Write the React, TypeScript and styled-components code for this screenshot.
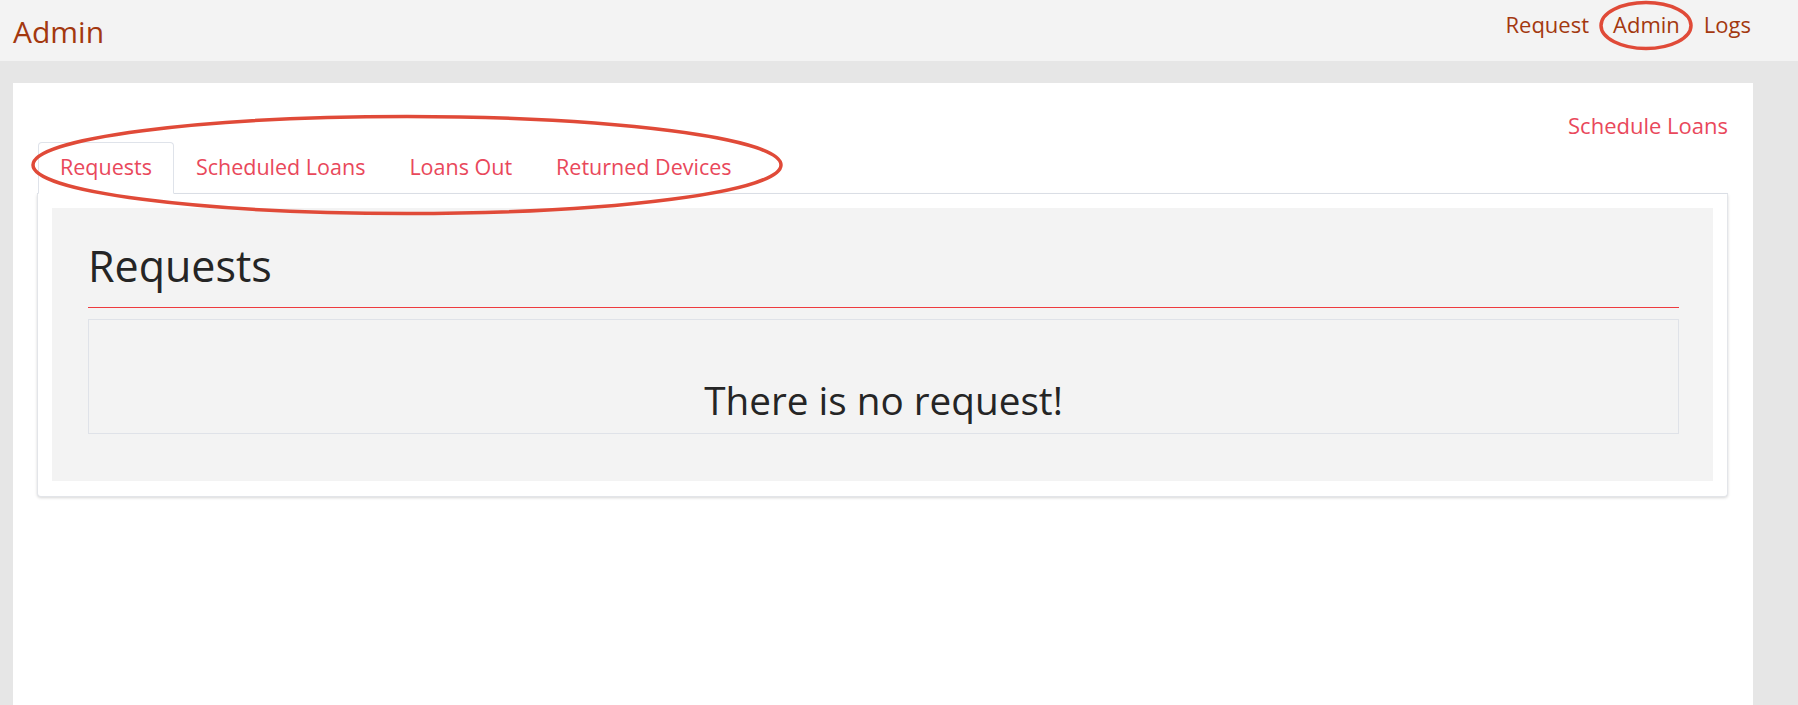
import React from "react";
import styled, { createGlobalStyle } from "styled-components";

const GlobalStyle = createGlobalStyle`
  html, body {
    margin: 0;
    padding: 0;
    height: 100%;
    background: #e6e6e6;
    font-family: "Open Sans", "Noto Sans", Arial, sans-serif;
  }
  #root {
    min-height: 100vh;
    display: flex;
    flex-direction: column;
  }
  * { box-sizing: border-box; }
`;

const Page = styled.div`
  position: relative;
  flex: 1;
  display: flex;
  flex-direction: column;
  min-height: 100vh;
`;

const Header = styled.header`
  height: 61px;
  background: #f3f3f3;
  display: flex;
  justify-content: space-between;
  align-items: flex-start;
  padding: 0 47px 0 13px;
`;

const Brand = styled.a`
  margin-top: 17px;
  font-size: 30px;
  line-height: 30px;
  color: #a3380f;
  text-decoration: none;
`;

const Nav = styled.nav`
  margin-top: 13px;
  display: flex;
  gap: 24px;
`;

const NavLink = styled.a`
  font-size: 22px;
  line-height: 22px;
  color: #a3380f;
  text-decoration: none;
`;

const Main = styled.main`
  flex: 1;
  display: flex;
  padding: 22px 45px 0 13px;
`;

const Container = styled.div`
  flex: 1;
  background: #ffffff;
  padding: 31px 25px 0 24px;
`;

const Actions = styled.div`
  display: flex;
  justify-content: flex-end;
`;

const ActionLink = styled.a`
  font-size: 22px;
  line-height: 22px;
  color: #e9485b;
  text-decoration: none;
`;

const TabList = styled.ul`
  list-style: none;
  margin: 6px 0 0;
  padding: 0 0 0 1px;
  display: flex;
  border-bottom: 1px solid #dfe3ea;
`;

const Tab = styled.li<{ $active?: boolean }>`
  margin-bottom: -1px;
  padding: 13px 21px 15px;
  font-size: 21.5px;
  line-height: 22px;
  color: #e9485b;
  background: ${(p) => (p.$active ? "#ffffff" : "transparent")};
  border: 1px solid ${(p) => (p.$active ? "#dfe3ea" : "transparent")};
  border-bottom-color: ${(p) => (p.$active ? "#ffffff" : "transparent")};
  border-radius: 4px 4px 0 0;
  cursor: pointer;
`;

const Panel = styled.div`
  background: #ffffff;
  border: 1px solid #e3e5e9;
  border-top: none;
  border-radius: 0 0 4px 4px;
  box-shadow: 0 1px 3px rgba(0, 0, 0, 0.16);
  padding: 14px 14px 15px 14px;
`;

const Section = styled.section`
  background: #f3f3f3;
  padding: 36px 34px 47px 36px;
`;

const Title = styled.h2`
  margin: 0;
  padding-bottom: 20px;
  font-size: 43px;
  line-height: 43px;
  font-weight: 400;
  color: #252525;
  border-bottom: 1px solid #ee3a3e;
`;

const EmptyBox = styled.div`
  margin-top: 11px;
  border: 1px solid #dfe2e8;
  padding: 61px 0 14px;
  text-align: center;
`;

const EmptyText = styled.h3`
  margin: 0;
  font-size: 38.7px;
  line-height: 38px;
  font-weight: 400;
  color: #252525;
`;

const Annotation = styled.svg`
  position: absolute;
  overflow: visible;
  pointer-events: none;
`;

export default function App() {
  return (
    <>
      <GlobalStyle />
      <Page>
        <Header>
          <Brand>Admin</Brand>
          <Nav>
            <NavLink>Request</NavLink>
            <NavLink>Admin</NavLink>
            <NavLink>Logs</NavLink>
          </Nav>
        </Header>
        <Main>
          <Container>
            <Actions>
              <ActionLink>Schedule Loans</ActionLink>
            </Actions>
            <TabList>
              <Tab $active>Requests</Tab>
              <Tab>Scheduled Loans</Tab>
              <Tab>Loans Out</Tab>
              <Tab>Returned Devices</Tab>
            </TabList>
            <Panel>
              <Section>
                <Title>Requests</Title>
                <EmptyBox>
                  <EmptyText>There is no request!</EmptyText>
                </EmptyBox>
              </Section>
            </Panel>
          </Container>
        </Main>
        <Annotation
          style={{ left: 0, top: 0 }}
          width="1798"
          height="705"
          viewBox="0 0 1798 705"
        >
          <ellipse cx="1646" cy="25.5" rx="45" ry="23" fill="none" stroke="#e04a38" strokeWidth="3.5" />
          <ellipse cx="407" cy="165" rx="374" ry="48.5" fill="none" stroke="#e04a38" strokeWidth="3.5" />
        </Annotation>
      </Page>
    </>
  );
}
